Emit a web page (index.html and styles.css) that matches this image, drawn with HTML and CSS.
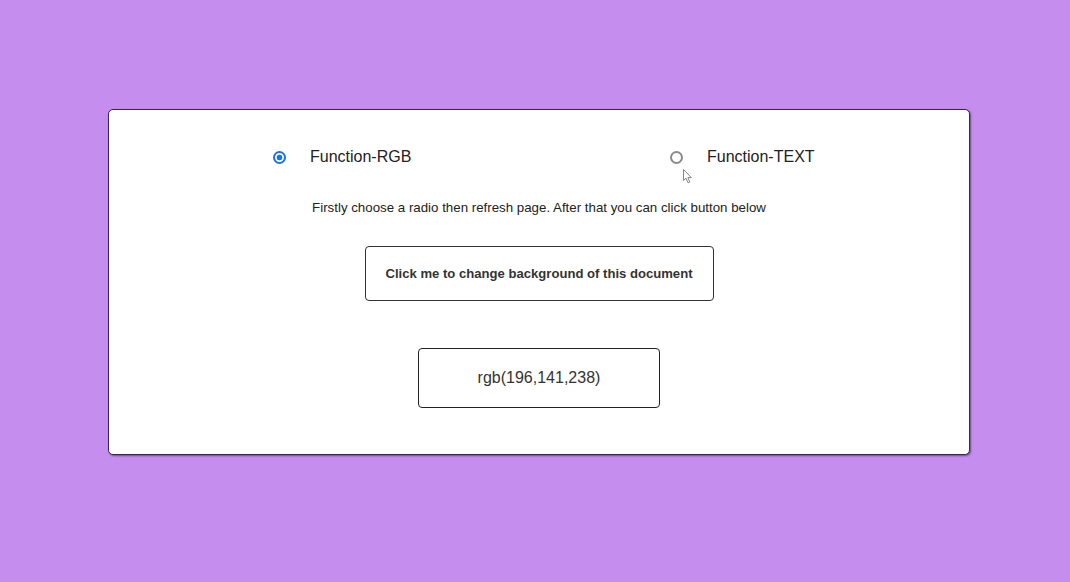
FILE: index.html
```html
<!DOCTYPE html>
<html lang="en">
<head>
<meta charset="utf-8">
<title>Background changer</title>
<link rel="stylesheet" href="styles.css">
</head>
<body>
<main class="page">
  <section class="card">
    <div class="options">
      <label class="option">
        <input type="radio" name="fn" class="radio" checked>
        <span class="option-label">Function-RGB</span>
      </label>
      <label class="option">
        <input type="radio" name="fn" class="radio">
        <span class="option-label">Function-TEXT</span>
      </label>
    </div>
    <p class="hint">Firstly choose a radio then refresh page. After that you can click button below</p>
    <button class="change-btn" type="button">Click me to change background of this document</button>
    <div class="result">rgb(196,141,238)</div>
  </section>
</main>
<svg class="cursor" width="10" height="15" viewBox="0 0 10 15" aria-hidden="true">
  <path d="M0.5 0.5 L0.5 11.5 L3 9.2 L5 13.8 L6.8 13 L4.9 8.6 L8.3 8.6 Z" fill="#fff" stroke="#777" stroke-width="0.9" stroke-linejoin="round"/>
</svg>
</body>
</html>
```
FILE: styles.css
```css
html, body {
  margin: 0;
  padding: 0;
}
body {
  position: relative;
  background: #c48dee;
  font-family: "Liberation Sans", Arial, sans-serif;
  color: #222;
  width: 1070px;
  height: 582px;
  overflow: hidden;
}
.page {
  padding-top: 109px;
}
.card {
  box-sizing: border-box;
  width: 862px;
  margin-left: 108px;
  background: #fff;
  border: 1px solid #3a2450;
  border-radius: 5px;
  box-shadow: 1px 1px 2px rgba(0, 0, 0, 0.45);
  padding: 38px 0 46px;
  display: flex;
  flex-direction: column;
  align-items: center;
}
.options {
  align-self: stretch;
  display: grid;
  grid-template-columns: 397px auto;
  padding-left: 164px;
  height: 18px;
}
.option {
  display: flex;
  align-items: center;
  gap: 24px;
  height: 18px;
}
.radio {
  -webkit-appearance: none;
  appearance: none;
  box-sizing: border-box;
  margin: 0;
  width: 13px;
  height: 13px;
  border: 2px solid #8a8a8a;
  border-radius: 50%;
  background: #fff;
}
.radio:checked {
  border-color: #1a73e8;
  background: radial-gradient(circle, #1a73e8 0 2.6px, #fff 3.2px);
}
.option-label {
  font-size: 16px;
  line-height: 18px;
  color: #222;
}
.hint {
  margin: 34px 0 0;
  font-size: 13.3px;
  line-height: 15px;
  color: #222;
}
.change-btn {
  margin-top: 31px;
  box-sizing: border-box;
  width: 349px;
  height: 55px;
  background: #fff;
  border: 1px solid #333;
  border-radius: 4px;
  font-family: "Liberation Sans", Arial, sans-serif;
  font-size: 13.1px;
  font-weight: bold;
  color: #333;
  padding: 0;
}
.result {
  margin-top: 47px;
  box-sizing: border-box;
  width: 242px;
  height: 60px;
  border: 1px solid #222;
  border-radius: 4px;
  display: flex;
  align-items: center;
  justify-content: center;
  font-size: 16px;
  color: #333;
}
.cursor {
  position: absolute;
  left: 683px;
  top: 169px;
}
```
